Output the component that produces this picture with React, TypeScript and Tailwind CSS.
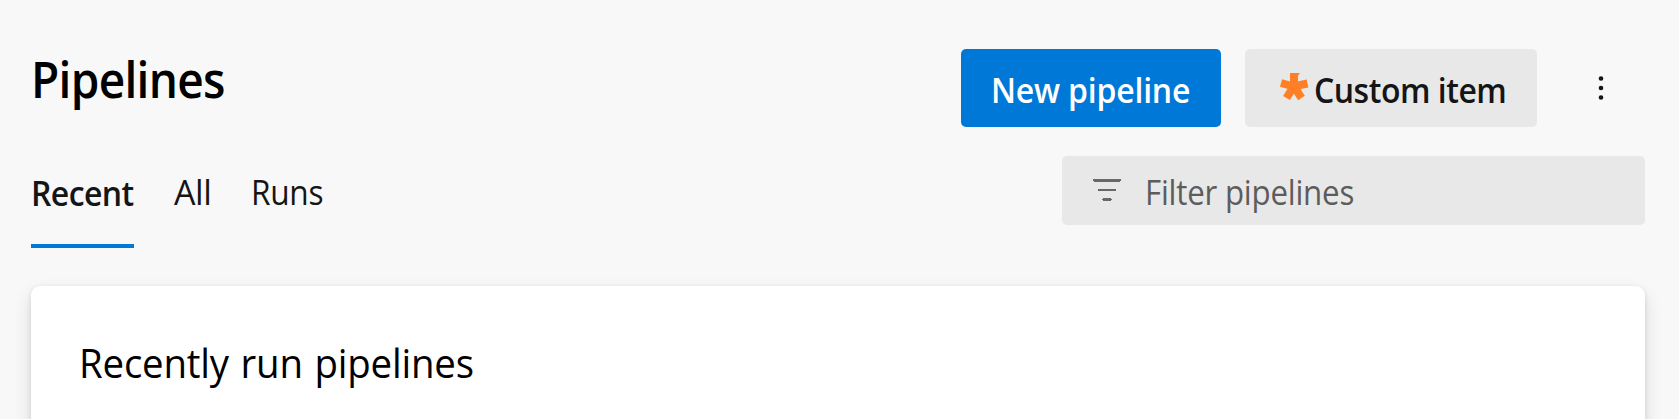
import React from "react";

const dots = [78.5, 88, 97.5];

export default function App() {
  return (
    <div className="h-[419px] w-full overflow-hidden bg-[#f8f8f8] pl-[31px] pr-[34px] font-['Open_Sans','Noto_Sans',sans-serif] text-[#151515]">
      <header className="flex h-[156px] items-start pt-[49px]">
        <h1 className="mr-auto origin-left scale-x-[0.92] text-[50px] font-semibold leading-[61px] tracking-[-0.75px] whitespace-nowrap text-black">
          Pipelines
        </h1>
        <button className="mr-6 flex h-[78px] w-[260px] items-center rounded-[5px] bg-[#0078d7] pl-[30px] pt-[5px] text-[34px] font-semibold whitespace-nowrap text-white">
          <span className="origin-left scale-x-[0.94] tracking-[-0.2px]">New pipeline</span>
        </button>
        <button className="flex h-[78px] w-[292px] items-center rounded-[5px] bg-[#e8e8e8] pl-[34px] text-[34px] font-semibold whitespace-nowrap">
          <svg className="mr-1 mb-1 shrink-0" width="31" height="30" viewBox="0 0 31 30" aria-hidden="true">
            <path d="M15 2v14M2 12l12.500 3.500L28.500 12.500M14.500 15.500L7.500 27M15 15.500l7.500 11.500" fill="none" stroke="#ff7f27" strokeWidth="8" />
            <path d="M11 2h10l-3 4z" fill="#ff7f27" />
          </svg>
          <span className="origin-left scale-x-[0.94] pt-[5px] tracking-[-0.5px]">Custom item</span>
        </button>
        <button className="ml-[44px] mr-[24px] flex h-[78px] w-10 items-center justify-center" aria-label="More actions">
          <svg width="40" height="78" viewBox="0 49 40 78" fill="#151515">
            {dots.map((y) => (
              <circle key={y} cx="20" cy={y} r="2.300" />
            ))}
          </svg>
        </button>
      </header>
      <div className="flex h-[130px] items-start justify-between">
        <nav className="flex text-[34px] whitespace-nowrap">
          <a className="h-[92px] w-[103px] border-b-4 border-[#0078d7] font-semibold leading-[75px]">
            <span className="inline-block origin-left scale-x-[0.94] tracking-[-0.6px]">Recent</span>
          </a>
          <a className="ml-10 w-[40px] leading-[72px] tracking-[-0.400px]">All</a>
          <a className="ml-[37px] origin-left scale-x-[0.93] leading-[72px] tracking-[-0.3px]">Runs</a>
        </nav>
        <div className="flex h-[69px] w-[583px] rounded-[5px] bg-[#e8e8e8] pl-[31px] text-[34px] leading-[72px] text-[#5c5c5c]">
          <svg className="mt-[23px] mr-[24px] shrink-0" width="28" height="22" viewBox="0 0 28 22" fill="#686868" aria-hidden="true">
            <path d="M0 0h28v2h-1v1H1V2H0zM5 10h18v2H5zM10 19h8v1h1v1h-1v1h-8v-1H9v-1h1z" />
          </svg>
          <span className="origin-left scale-x-[0.92] tracking-[-0.250px] whitespace-nowrap">Filter pipelines</span>
        </div>
      </div>
      <section className="h-[240px] rounded-[9px] bg-white pl-[48px] pt-[47px] shadow-[0_8px_18px_rgba(0,0,0,0.13),0_1px_4px_rgba(0,0,0,0.10)]">
        <h2 className="origin-left scale-x-[0.96] text-[40px] leading-[60px] tracking-[-0.2px] [word-spacing:2px] whitespace-nowrap text-black">Recently run pipelines</h2>
      </section>
    </div>
  );
}
